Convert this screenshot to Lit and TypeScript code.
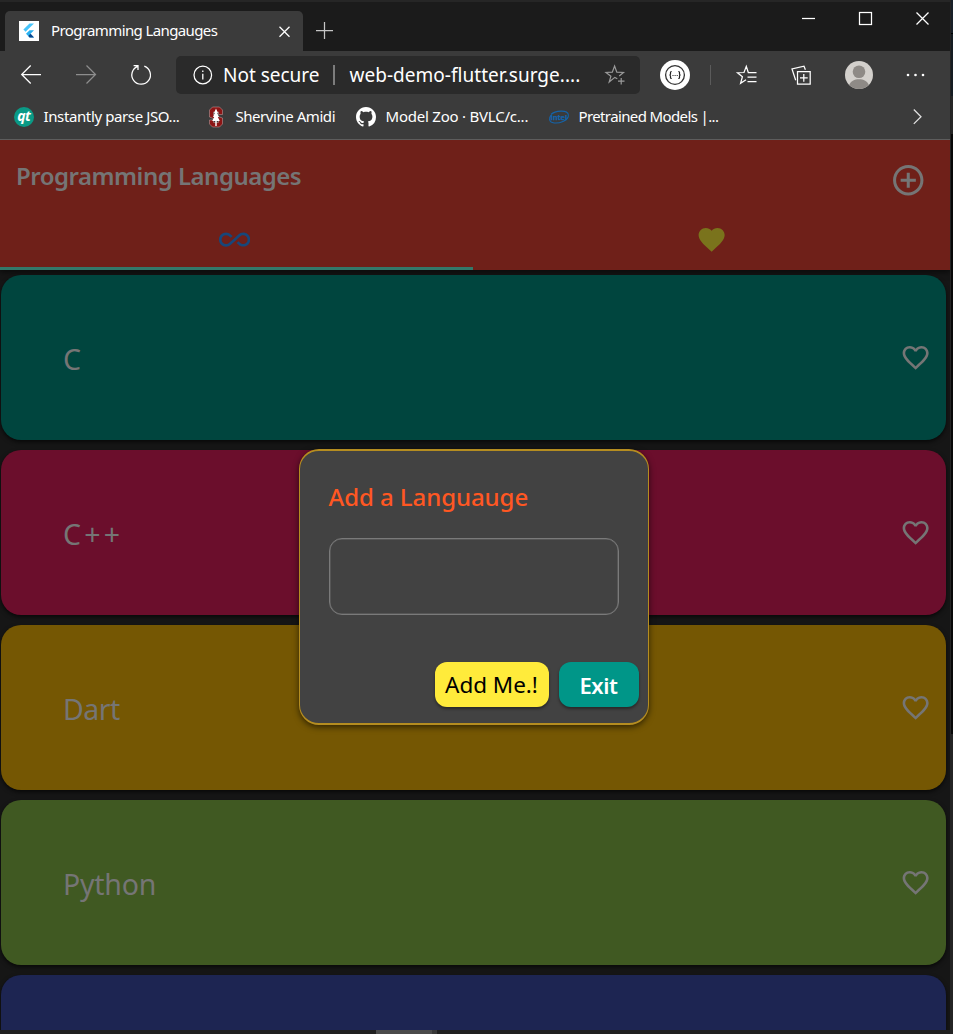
import { LitElement, html, css } from "lit";
import { customElement, property } from "lit/decorators.js";

const HEART =
  "M12 21.35l-1.45-1.32C5.4 15.36 2 12.28 2 8.5 2 5.42 4.42 3 7.5 3c1.74 0 3.41.81 4.5 2.09C13.09 3.81 14.76 3 16.5 3 19.58 3 22 5.42 22 8.5c0 3.78-3.4 6.86-8.55 11.54L12 21.35z";
const HEART_BORDER =
  "M16.5 3c-1.74 0-3.41.81-4.5 2.09C10.91 3.81 9.24 3 7.5 3 4.42 3 2 5.42 2 8.5c0 3.78 3.4 6.86 8.55 11.54L12 21.35l1.45-1.32C18.6 15.36 22 12.28 22 8.5 22 5.42 19.58 3 16.5 3zm-4.4 15.55l-.1.1-.1-.1C7.14 14.24 4 11.39 4 8.5 4 6.5 5.5 5 7.5 5c1.54 0 3.04.99 3.57 2.36h1.87C13.46 5.99 14.96 5 16.5 5c2 0 3.5 1.5 3.5 3.5 0 2.89-3.14 5.74-7.9 10.05z";
const ADD_CIRCLE =
  "M13 7h-2v4H7v2h4v4h2v-4h4v-2h-4V7zm-1-5C6.48 2 2 6.48 2 12s4.48 10 10 10 10-4.48 10-10S17.52 2 12 2zm0 18c-4.41 0-8-3.59-8-8s3.59-8 8-8 8 3.59 8 8-3.59 8-8 8z";
const INFINITE =
  "M18.6 6.62c-1.44 0-2.8.56-3.77 1.53L12 10.66 10.48 12h.01L7.8 14.39c-.64.64-1.49.99-2.4.99-1.87 0-3.39-1.51-3.39-3.38S3.53 8.62 5.4 8.62c.91 0 1.76.35 2.44 1.03l1.13 1 1.51-1.34L9.22 8.2C8.2 7.18 6.84 6.62 5.4 6.62 2.42 6.62 0 9.04 0 12s2.42 5.38 5.4 5.38c1.44 0 2.8-.56 3.77-1.53l2.83-2.5.01.01L13.52 12h-.01l2.69-2.39c.64-.64 1.49-.99 2.4-.99 1.87 0 3.39 1.51 3.39 3.38s-1.52 3.38-3.39 3.38c-.9 0-1.76-.35-2.44-1.03l-1.14-1.01-1.51 1.34 1.27 1.12c1.02 1.01 2.37 1.57 3.82 1.57 2.98 0 5.4-2.41 5.4-5.38s-2.42-5.37-5.4-5.37z";
const GITHUB =
  "M8 0C3.58 0 0 3.58 0 8c0 3.54 2.29 6.53 5.47 7.59.4.07.55-.17.55-.38 0-.19-.01-.82-.01-1.49-2.01.37-2.53-.49-2.69-.94-.09-.23-.48-.94-.82-1.13-.28-.15-.68-.52-.01-.53.63-.01 1.08.58 1.23.82.72 1.21 1.87.87 2.33.66.07-.52.28-.87.51-1.07-1.78-.2-3.64-.89-3.64-3.95 0-.87.31-1.59.82-2.15-.08-.2-.36-1.02.08-2.12 0 0 .67-.21 2.2.82.64-.18 1.32-.27 2-.27s1.36.09 2 .27c1.53-1.04 2.2-.82 2.2-.82.44 1.1.16 1.92.08 2.12.51.56.82 1.27.82 2.15 0 3.07-1.87 3.75-3.65 3.95.29.25.54.73.54 1.48 0 1.07-.01 1.93-.01 2.2 0 .21.15.46.55.38A8.01 8.01 0 0 0 16 8c0-4.42-3.58-8-8-8z";

const mdi = (d: string, size: number) =>
  html`<svg class="mdi" width=${size} height=${size} viewBox="0 0 24 24"><path fill="currentColor" d=${d} /></svg>`;

@customElement("browser-chrome")
export class BrowserChrome extends LitElement {
  static styles = css`
    :host { display: block; font-family: "Noto Sans", "Open Sans", sans-serif; color: #fff; }
    svg { display: block; flex: none; overflow: visible; }
    .line { fill: none; stroke: #fff; stroke-width: 1.25; }
    .titlebar { display: flex; height: 51px; background: #1b1b1b; border-top: 2px solid #262626; box-sizing: border-box; }
    .tab { display: flex; align-items: center; box-sizing: border-box; width: 298px; height: 40px; margin: 9px 0 0 5px; padding: 0 13.5px 0 14px; background: #3b3b3b; border-radius: 5px 5px 0 0; }
    .tab-title { flex: 1; margin-left: 12px; font-size: 15px; letter-spacing: -0.62px; white-space: nowrap; line-height: 20px; padding-bottom: 2px; }
    .plus { margin: 20px 0 0 13px; }
    .controls { display: flex; margin: 9px 21.5px 0 auto; gap: 44px; }
    .toolbar { display: flex; align-items: center; height: 48px; background: #3b3b3b; padding-left: 21px; }
    .back { margin-right: 34px; }
    .forward { margin-right: 34px; opacity: .42; }
    .omnibox { display: flex; align-items: center; box-sizing: border-box; width: 464px; height: 38px; margin-left: 24px; padding: 0 15px 0 17px; background: #2a2a2a; border-radius: 5px; font-size: 19px; line-height: 26px; white-space: nowrap; }
    .secure { width: 110px; margin-left: 11px; letter-spacing: -0.02px; }
    .bar { width: 1.5px; height: 20px; background: #7c7c7c; }
    .url { flex: 1; margin-left: 15px; letter-spacing: 0.03px; }
    .ext { margin-left: 20px; }
    .sep { width: 1px; height: 20px; background: #5b5b5b; margin: 0 26px 0 20px; }
    .collections { margin-left: 34px; }
    .avatar { margin-left: 34px; }
    .dots { margin-left: 33px; }
    .bookmarks { display: flex; align-items: center; box-sizing: border-box; height: 41px; padding: 0 28px 4px 14px; background: #3b3b3b; border-bottom: 1px solid #5d5d5d; font-size: 15px; line-height: 20px; white-space: nowrap; }
    .bm { display: flex; align-items: center; gap: 9.5px; }
    .label { padding-bottom: 2px; }
    .bm-a { width: 192px; letter-spacing: -0.38px; }
    .bm-b { width: 150px; letter-spacing: -0.45px; }
    .bm-c { width: 193px; letter-spacing: -0.22px; }
    .bm-d { letter-spacing: -0.62px; }
    .chev { margin-left: auto; }
  `;

  render() {
    return html`
      <div class="titlebar">
        <div class="tab">
          <svg width="20" height="20" viewBox="0 0 20 20">
            <rect width="20" height="20" fill="#fff" />
            <path d="M10.5 2.5H15L6.6 10.8 4.4 8.5z" fill="#47c5fb" />
            <path d="M10.6 9.3H15L11.5 12.8 15 16.4H10.6L7 12.8z" fill="#2ab1f0" />
            <path d="M9.3 15L11.5 12.8 15 16.4H10.6z" fill="#0b458c" />
          </svg>
          <span class="tab-title">Programming Langauges</span>
          <svg width="11" height="11" viewBox="0 0 11 11"><path class="line" d="M.5 .8L10.500 10.800M10.500 .8L.5 10.800" /></svg>
        </div>
        <svg class="plus" width="17" height="17" viewBox="0 0 17 17"><path class="line" stroke-opacity=".75" d="M8.500 0V17M0 8.500H17" /></svg>
        <div class="controls">
          <svg width="13" height="15" viewBox="0 0 13 15"><path class="line" d="M0 7.500H13" /></svg>
          <svg width="13" height="15" viewBox="0 0 13 15"><rect class="line" x=".5" y="1.500" width="12" height="12" /></svg>
          <svg width="13" height="15" viewBox="0 0 13 15"><path class="line" d="M.5 1.500L12.500 13.500M12.500 1.500L.5 13.500" /></svg>
        </div>
      </div>
      <div class="toolbar">
        <svg class="back" width="21" height="20" viewBox="0 0 21 20"><path class="line" d="M20 9.500H.8M9.700 .5L.7 9.500L9.700 18.500" /></svg>
        <svg class="forward" width="21" height="20" viewBox="0 0 21 20"><path class="line" d="M0 9.500H19.500M10.500 .5L19.500 9.500L10.500 18.500" /></svg>
        <svg width="21" height="20" viewBox="0 0 21 20"><path class="line" d="M13.300 1.200A9.300 9.300 0 1 1 6.700 1.300M2.600 .6H7V5" /></svg>
        <div class="omnibox">
          <svg width="19" height="19" viewBox="0 0 19 19"><circle class="line" cx="9.800" cy="9" r="8.800" /><path d="M9.800 7.700V13.500M9.800 4.500V6.100" stroke="#fff" stroke-width="1.300" /></svg>
          <span class="secure">Not secure</span><span class="bar"></span>
          <span class="url">web-demo-flutter.surge....</span>
          <svg width="20" height="20" viewBox="0 0 20 20" fill="none" stroke="#9a9a9a" stroke-width="1.200">
            <path d="M12.300 13.700L9.800 12.400 4.200 17 5.900 11.200 1 7.500 7.300 7.100 9.600 1 11.800 7.100 18.500 7.500 14.200 11M13 16.200H19.500M16.200 13V19.500" />
          </svg>
        </div>
        <svg class="ext" width="30" height="30" viewBox="0 0 30 30">
          <circle cx="15" cy="15" r="15" fill="#fff" />
          <circle cx="15" cy="15" r="9.400" fill="none" stroke="#333" stroke-width="1.300" />
          <path d="M11.700 11.500Q10.300 11.500 10.500 13Q10.700 15 9.400 15Q10.700 15 10.500 17Q10.300 18.500 11.700 18.500M18.300 11.500Q19.700 11.500 19.500 13Q19.300 15 20.600 15Q19.300 15 19.500 17Q19.700 18.500 18.300 18.500" fill="none" stroke="#222" stroke-width="1.200" />
          <path d="M12.500 15.500h1M14.600 15.500h1M16.700 15.500h1" stroke="#222" stroke-width="1.200" />
        </svg>
        <span class="sep"></span>
        <svg width="20" height="20" viewBox="0 0 20 20"><path class="line" d="M12.500 7.500H11.300L9.300 1.400 7 7.500 .5 7.700 5.400 11.700 3.600 18.300 9 14.700M11 7.500H19.500M10.500 12H19.500M10.500 16.500H19.500" /></svg>
        <svg class="collections" width="20" height="20" viewBox="0 0 20 20"><path class="line" d="M6.500 6.500H19.200V19.200H6.500ZM12.800 9V16.700M9 12.800H16.700M4.700 15.300L1 4 13 1.200 14.400 4.700" /></svg>
        <svg class="avatar" width="28" height="28" viewBox="0 0 28 28">
          <circle cx="14" cy="14" r="14" fill="#d3d0cc" />
          <circle cx="14" cy="10.700" r="6.300" fill="#8e8a86" />
          <path d="M4.200 24C5.500 20 9.500 18.200 14 18.200S22.500 20 23.800 24A14 14 0 0 1 4.200 24Z" fill="#8e8a86" />
        </svg>
        <svg class="dots" width="19" height="4" viewBox="0 0 19 4" fill="#fff"><circle cx="2" cy="2" r="1.300" /><circle cx="9.500" cy="2" r="1.300" /><circle cx="17" cy="2" r="1.300" /></svg>
      </div>
      <div class="bookmarks">
        <span class="bm bm-a">
          <svg width="20" height="20" viewBox="0 0 20 20"><circle cx="10" cy="10" r="10" fill="#0a9a86" /><text x="9.800" y="14" text-anchor="middle" font-family="Open Sans, sans-serif" font-size="14" font-weight="700" font-style="italic" fill="#fff" letter-spacing="-.5">qt</text></svg>
          <span class="label">Instantly parse JSO...</span>
        </span>
        <span class="bm bm-b">
          <svg width="20" height="20" viewBox="0 0 20 20">
            <path d="M6.500 0H13.500L16.500 3V7.500H12.500V5H7.500V8L16.500 11V17L13.500 20H6.500L3.500 17V13H7.500V15.500H12.500V13.500L3.500 10V3Z" fill="#8c1515" stroke="#c9a9a9" stroke-width=".5" />
            <path d="M10 1.500L12 6H11.200L13 10H11.800L13.800 14H10.700V19H9.300V14H6.200L8.200 10H7L8.800 6H8Z" fill="#fff" />
          </svg>
          <span class="label">Shervine Amidi</span>
        </span>
        <span class="bm bm-c">
          <svg width="20" height="20" viewBox="0 0 16 16"><path d=${GITHUB} fill="#fff" /></svg>
          <span class="label">Model Zoo · BVLC/c...</span>
        </span>
        <span class="bm bm-d">
          <svg width="20" height="20" viewBox="0 0 20 20">
            <path d="M2 7.500C6 3.500 18.500 2.500 19.300 7.500 19.800 10.500 17.500 13 14 14.500 8 17 1 16.500 .6 12.500 .5 11 1 9.500 2 8.500" fill="none" stroke="#1464ab" stroke-width="1.100" />
            <text x="9.800" y="12.800" text-anchor="middle" font-family="Open Sans, sans-serif" font-size="7.500" font-weight="700" fill="#1464ab" stroke="#1464ab" stroke-width=".25" letter-spacing="-.1">intel</text>
          </svg>
          <span class="label">Pretrained Models |...</span>
        </span>
        <svg class="chev" width="9" height="16" viewBox="0 0 9 16"><path class="line" stroke-opacity=".85" d="M.8 .5L8 7.700L.8 14.900" /></svg>
      </div>
    `;
  }
}

@customElement("language-card")
export class LanguageCard extends LitElement {
  @property() name = "";
  @property() color = "";
  @property({ type: Number }) tracking = 0;
  static styles = css`
    :host { display: block; }
    .card { display: flex; align-items: center; justify-content: space-between; box-sizing: border-box; height: 165px; padding: 1px 14.5px 0 62px; border-radius: 20px; color: #757575; box-shadow: 0 2px 4px rgba(0, 0, 0, .65); }
    .name { font-size: 28.5px; line-height: 40px; margin-top: 1px; }
    svg { display: block; }
  `;
  render() {
    return html`<div class="card" style="background:${this.color}">
      <span class="name" style="letter-spacing:${this.tracking}px">${this.name}</span>${mdi(HEART_BORDER, 31.25)}
    </div>`;
  }
}

@customElement("add-dialog")
export class AddDialog extends LitElement {
  static styles = css`
    :host { display: block; }
    .dialog { box-sizing: border-box; width: 349.5px; height: 275.5px; padding: 26px 9px 0 28.5px; border: solid #b58d20; border-width: 2px 1px; border-radius: 20px; background: #424242; box-shadow: 0 2px 6px rgba(0, 0, 0, .6); }
    .title { font-size: 24px; line-height: 40px; font-weight: 500; letter-spacing: -0.07px; color: #ff5722; white-space: nowrap; }
    .field { box-sizing: border-box; width: 290px; height: 77px; margin-top: 21px; border: 1px solid #7a7a7a; border-radius: 13px; box-shadow: inset 0 0 0 .5px #6a6a6a; }
    .actions { display: flex; justify-content: flex-end; gap: 10px; margin-top: 47px; }
    .btn { display: grid; place-items: center; height: 45px; border-radius: 12px; font-size: 22px; line-height: 30px; white-space: nowrap; box-shadow: 0 2px 3px rgba(0, 0, 0, .4); }
    .add { width: 114px; background: #ffeb3b; color: #000; font-size: 22.5px; letter-spacing: -0.04px; }
    .exit { width: 80px; background: #009688; color: #fff; font-weight: 600; letter-spacing: -0.4px; }
  `;
  render() {
    return html`<div class="dialog" role="dialog">
      <div class="title">Add a Languauge</div>
      <div class="field"></div>
      <div class="actions"><div class="btn add">Add Me.!</div><div class="btn exit">Exit</div></div>
    </div>`;
  }
}

const LANGUAGES = [
  { name: "C", color: "#00453e", tracking: 0 },
  { name: "C++", color: "#6b0e2c", tracking: 3.2 },
  { name: "Dart", color: "#755703", tracking: -0.5 },
  { name: "Python", color: "#405922", tracking: -0.25 },
  { name: "", color: "#1d2552", tracking: 0 },
];

@customElement("app-root")
export class AppRoot extends LitElement {
  static styles = css`
    :host { display: block; font-family: "Noto Sans", "Open Sans", sans-serif; }
    .screen { display: grid; grid-template-columns: 950px 3px; width: 953px; height: 1034px; overflow: hidden; background: #161616; }
    .main { display: flex; flex-direction: column; height: 1034px; }
    .edge { background: linear-gradient(#182028 0 33px, #000 33px 34px, #151c22 34px 96px, #262626 96px 134px, #090909 134px 734px, #242424 734px); border-left: 1px solid #242424; }
    .stage { position: relative; height: 890px; overflow: hidden; background: #161616; }
    .appbar { display: flex; flex-direction: column; box-sizing: border-box; height: 130px; background: #6f2019; color: #757575; box-shadow: 0 2px 6px rgba(0, 0, 0, .6); }
    .top { display: flex; align-items: center; justify-content: space-between; height: 81px; padding: 0 23.5px 0 16px; }
    .heading { font-size: 24px; font-weight: 600; line-height: 34px; margin-top: -9px; letter-spacing: -0.5px; white-space: nowrap; }
    .tabs { display: grid; grid-template-columns: 473px 1fr; height: 49px; }
    .t { display: flex; justify-content: center; box-sizing: border-box; height: 49px; padding-top: 2.5px; }
    .all { color: #17477a; border-bottom: 3px solid #33796a; padding-right: 4px; }
    .fav { color: #7a731c; padding-left: 1px; }
    .list { display: flex; flex-direction: column; gap: 10px; margin: 5px 4px 0 1px; }
    .modal { position: absolute; left: 299px; top: 309px; }
    .taskbar { display: flex; height: 4px; background: #202020; }
    .thumb { width: 56px; margin-left: 376px; background: #4b4b4b; }
    .thumb-end { width: 5px; background: #383838; }
    svg { display: block; }
  `;

  render() {
    return html`<div class="screen">
      <div class="main">
        <browser-chrome></browser-chrome>
        <div class="stage">
          <div class="appbar">
            <div class="top"><span class="heading">Programming Languages</span>${mdi(ADD_CIRCLE, 36.5)}</div>
            <div class="tabs"><div class="t all">${mdi(INFINITE, 31.25)}</div><div class="t fav">${mdi(HEART, 31.25)}</div></div>
          </div>
          <div class="list">
            ${LANGUAGES.map((l) => html`<language-card .name=${l.name} .color=${l.color} .tracking=${l.tracking}></language-card>`)}
          </div>
          <add-dialog class="modal"></add-dialog>
        </div>
        <div class="taskbar"><div class="thumb"></div><div class="thumb-end"></div></div>
      </div>
      <div class="edge"></div>
    </div>`;
  }
}
